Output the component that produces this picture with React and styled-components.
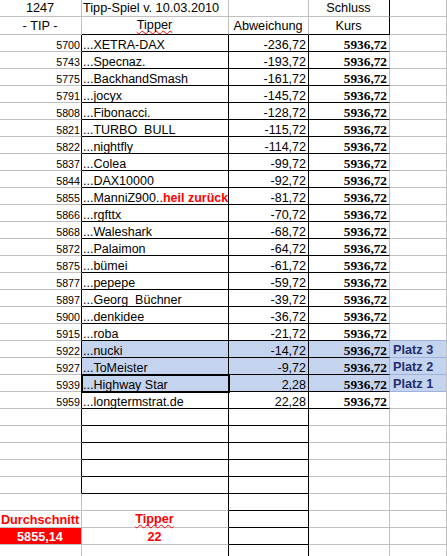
import React from "react";
import styled, { createGlobalStyle, css } from "styled-components";

const GRID = "#c0c0c0";
const INK = "#000";
const BLUE = "#c5d4ee";
const BLUE_LINE = "#9fb2dc";
const RED = "#ff0000";

const GlobalStyle = createGlobalStyle`
  body {
    margin: 0;
    background: #fff;
    font-family: "Liberation Sans", Arial, sans-serif;
  }
`;

const Sheet = styled.div`
  display: grid;
  grid-template-columns: 82px 147px 80px 81px 1fr;
  grid-template-rows: 17px 18px;
  grid-auto-rows: 17px;
  width: 447px;
  height: 556px;
  overflow: hidden;
  color: #000;
`;

const Cell = styled.div`
  box-sizing: border-box;
  display: flex;
  align-items: flex-end;
  justify-content: ${props =>
    props.$align === "right" ? "flex-end" : props.$align === "center" ? "center" : "flex-start"};
  padding: 0 2px 0 1px;
  border-right: 1px solid ${props => props.$r || GRID};
  border-bottom: 1px solid ${props => props.$b || GRID};
  background: ${props => props.$bg || "transparent"};
  white-space: nowrap;
  overflow: hidden;
  font-size: 12.5px;
  line-height: 1;
  ${props =>
    props.$active &&
    css`
      position: relative;
      z-index: 1;
      outline: 2px solid #000;
      outline-offset: -1px;
    `}
`;

const HeadCell = styled(Cell)`
  font-size: 12.7px;
  padding-bottom: 1px;
  overflow: visible;
`;

const TipCell = styled(Cell)`
  justify-content: flex-end;
  padding-right: 1px;
  font-size: 10.7px;
`;

const DiffCell = styled(Cell)`
  justify-content: flex-end;
`;

const KursCell = styled(Cell)`
  justify-content: flex-end;
  font-family: "Liberation Serif", "Times New Roman", serif;
  font-weight: bold;
  font-size: 13.3px;
`;

const RankCell = styled(Cell)`
  padding-left: 3px;
  font-weight: bold;
  font-size: 12.7px;
  color: #1f2d6e;
`;

const StatCell = styled(Cell)`
  justify-content: center;
  font-weight: bold;
  font-size: 12.7px;
  overflow: visible;
  color: ${props => (props.$bg ? "#fff" : RED)};
`;

const Squiggle = styled.span`
  display: inline-block;
  line-height: 15px;
  text-decoration: underline wavy ${RED};
  text-decoration-skip-ink: none;
  text-decoration-thickness: 1px;
  text-underline-offset: 1px;
`;

const Alert = styled.span`
  color: ${RED};
  font-weight: bold;
`;

const entries = [
  [5700, "XETRA-DAX", "-236,72"],
  [5743, "Specnaz.", "-193,72"],
  [5775, "BackhandSmash", "-161,72"],
  [5791, "jocyx", "-145,72"],
  [5808, "Fibonacci.", "-128,72"],
  [5821, "TURBO_BULL", "-115,72"],
  [5822, "nightfly", "-114,72"],
  [5837, "Colea", "-99,72"],
  [5844, "DAX10000", "-92,72"],
  [5855, "ManniZ900..", "-81,72", "heil zurück"],
  [5866, "rgfttx", "-70,72"],
  [5868, "Waleshark", "-68,72"],
  [5872, "Palaimon", "-64,72"],
  [5875, "bümei", "-61,72"],
  [5877, "pepepe", "-59,72"],
  [5897, "Georg_Büchner", "-39,72"],
  [5900, "denkidee", "-36,72"],
  [5915, "roba", "-21,72"],
  [5922, "nucki", "-14,72"],
  [5927, "ToMeister", "-9,72"],
  [5939, "Highway Star", "2,28"],
  [5959, "longtermstrat.de", "22,28"]
];

const ranks = { 18: "Platz 3", 19: "Platz 2", 20: "Platz 1" };

function DataRow({ index, tip, name, diff, note }) {
  const rank = ranks[index];
  const bg = rank ? BLUE : undefined;
  const nextBlue = ranks[index + 1] !== undefined;
  return (
    <>
      <TipCell $r={INK}>{tip}</TipCell>
      <Cell $r={INK} $b={INK} $bg={bg} $active={index === 20}>
        ...{name}
        {note && <Alert>{note}</Alert>}
      </Cell>
      <DiffCell $r={INK} $b={INK} $bg={bg}>
        {diff}
      </DiffCell>
      <KursCell $b={INK} $r={rank ? BLUE_LINE : GRID} $bg={bg}>
        5936,72
      </KursCell>
      <RankCell $bg={bg} $b={rank || nextBlue ? BLUE_LINE : GRID}>
        {rank}
      </RankCell>
    </>
  );
}

function EmptyRow({ boxed, children }) {
  return (
    <>
      {children || (
        <>
          <Cell $r={boxed ? INK : GRID} />
          <Cell $r={INK} $b={boxed ? INK : GRID} />
        </>
      )}
      <Cell $r={INK} $b={INK} />
      <Cell />
      <Cell />
    </>
  );
}

export default function App() {
  return (
    <>
      <GlobalStyle />
      <Sheet>
        <HeadCell $align="center">1247</HeadCell>
        <HeadCell>Tipp-Spiel v. 10.03.2010</HeadCell>
        <HeadCell />
        <HeadCell $align="center" $r={INK}>
          Schluss
        </HeadCell>
        <HeadCell />

        <HeadCell $align="center">- TIP -</HeadCell>
        <HeadCell $align="center" $b={INK}>
          <Squiggle>Tipper</Squiggle>
        </HeadCell>
        <HeadCell $align="center" $b={INK}>
          Abweichung
        </HeadCell>
        <HeadCell $align="center" $b={INK} $r={INK}>
          Kurs
        </HeadCell>
        <HeadCell />

        {entries.map(([tip, name, diff, note], i) => (
          <DataRow key={tip} index={i} tip={tip} name={name} diff={diff} note={note} />
        ))}

        {[0, 1, 2, 3, 4].map(n => (
          <EmptyRow key={n} boxed />
        ))}
        <EmptyRow />
        <EmptyRow>
          <StatCell>Durchschnitt</StatCell>
          <StatCell $r={INK}>
            <Squiggle>Tipper</Squiggle>
          </StatCell>
        </EmptyRow>
        <EmptyRow>
          <StatCell $bg={RED}>5855,14</StatCell>
          <StatCell $r={INK}>22</StatCell>
        </EmptyRow>
        <EmptyRow />
      </Sheet>
    </>
  );
}
